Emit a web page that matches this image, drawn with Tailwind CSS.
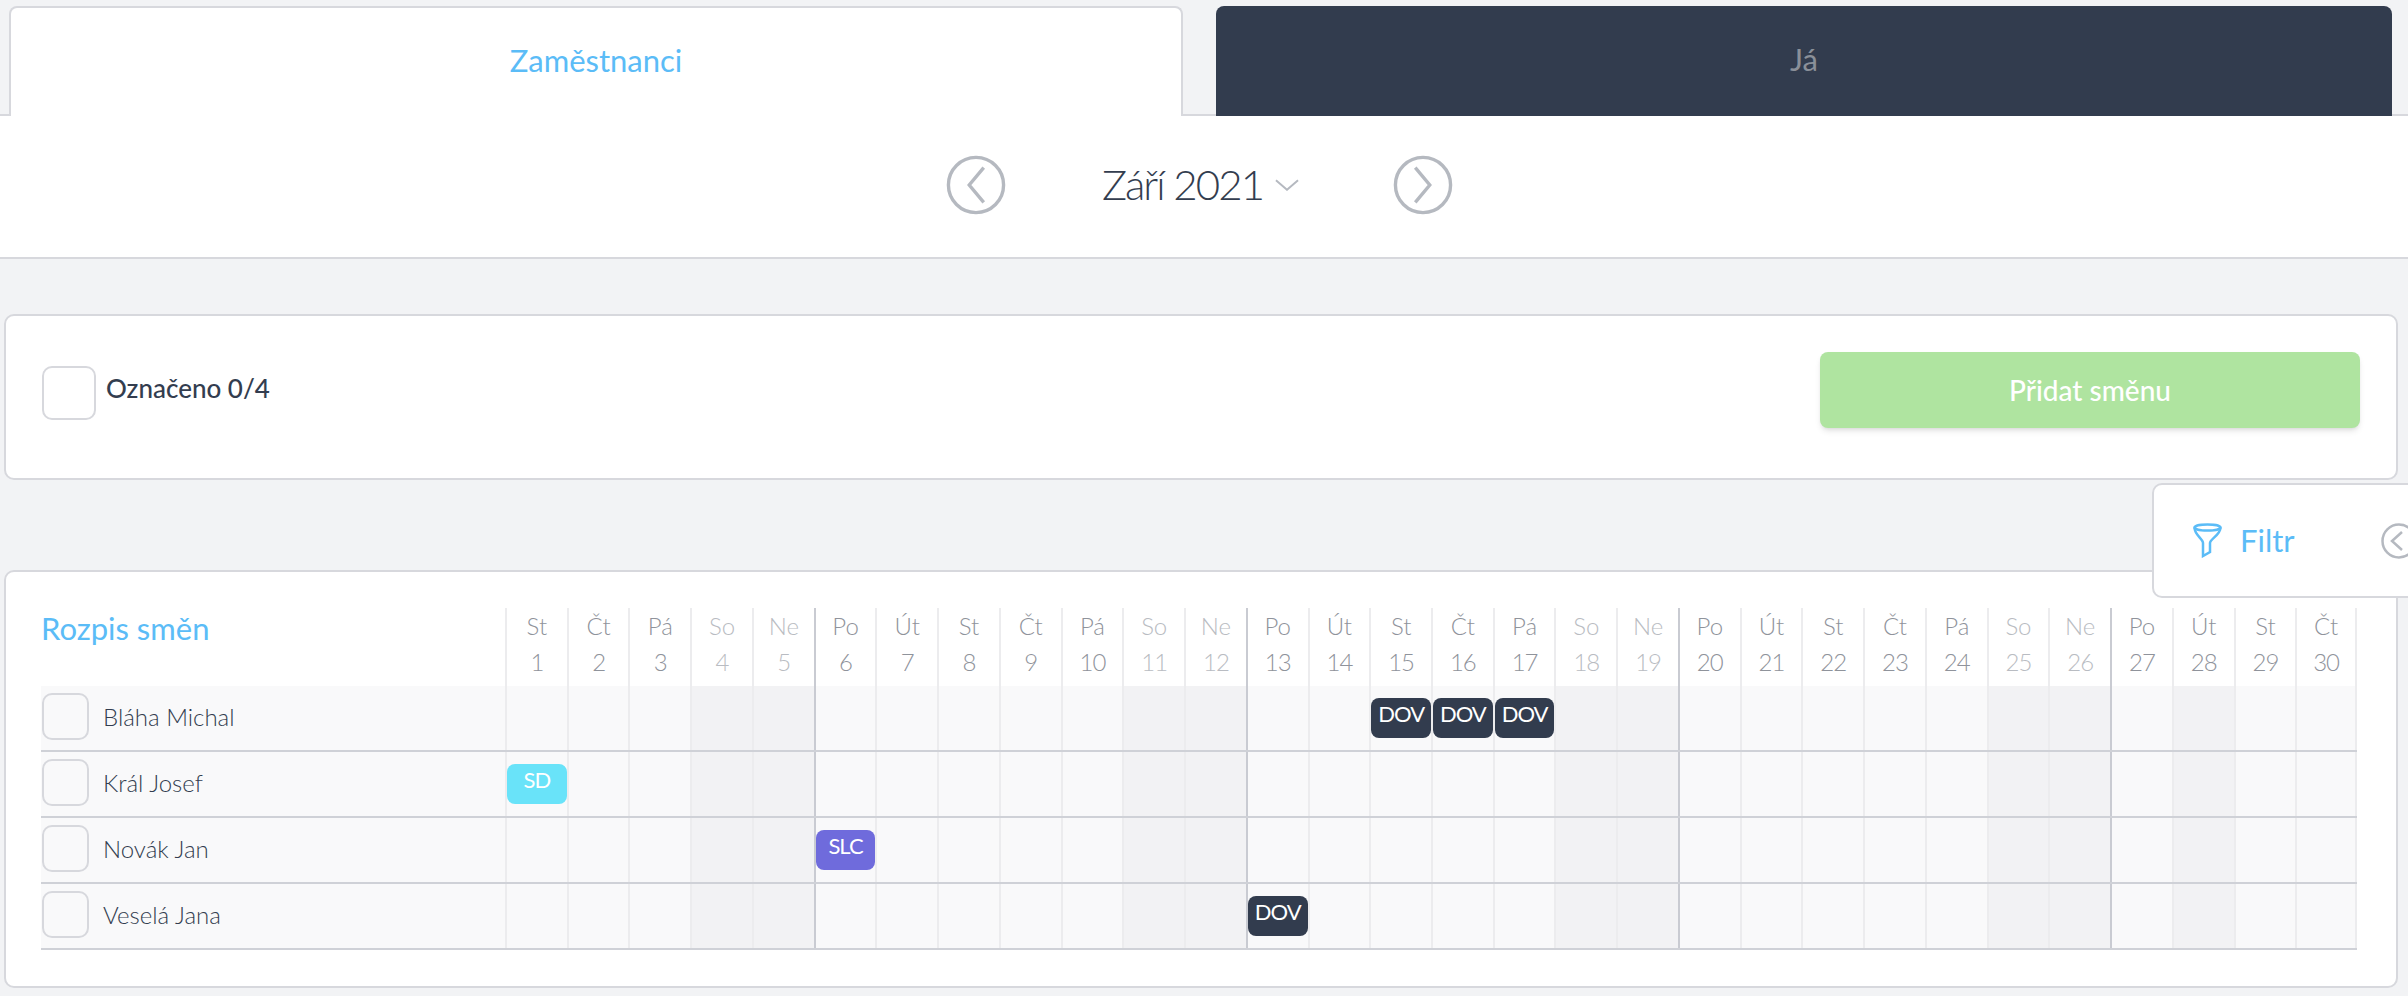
<!DOCTYPE html>
<html lang="cs">
<head>
  <meta charset="UTF-8" />
  <title>Rozpis směn</title>
  <script src="https://cdn.jsdelivr.net/npm/@tailwindcss/browser@4"></script>
</head>
<body class="relative h-[996px] overflow-hidden bg-[#f2f3f5] font-[Lato,sans-serif] text-[#333d4f]">

  <!-- tabs -->
  <div class="relative z-10 flex h-[116px] items-end pt-[6px]">
    <div class="ml-[9px] flex h-[110px] w-[1174px] items-center justify-center rounded-t-[8px] border-2 border-b-0 border-[#d7d8dd] bg-white pb-[4px] text-[31px] text-[#5bbcf7]">Zaměstnanci</div>
    <div class="ml-[33px] flex h-[110px] w-[1176px] items-center justify-center rounded-t-[8px] bg-[#323c4e] pb-[4px] text-[31px] text-[#8a9099]">Já</div>
  </div>

  <!-- month switcher -->
  <div class="-mt-[2px] flex h-[145px] items-center border-y-2 border-[#d7d8dd] bg-white pb-[3px] pl-[946px]">
    <svg class="h-[60px] w-[60px]" viewBox="0 0 62 62" fill="none" stroke="#b5b9c0" stroke-width="3.5"><circle cx="31" cy="31" r="28.5" /><path d="M39 13 L24 31 L39 49" /></svg>
    <div class="ml-[96px] w-[156px] pb-[2px] text-[42px] leading-none font-light tracking-[-1.9px] whitespace-nowrap">Září 2021</div>
    <svg class="ml-[17px] h-[12px] w-[24px]" viewBox="0 0 25 12" fill="none" stroke="#b5b9c0" stroke-width="2"><path d="M1 1 L12.5 11 L24 1" /></svg>
    <svg class="ml-[94px] h-[60px] w-[60px]" viewBox="0 0 62 62" fill="none" stroke="#b5b9c0" stroke-width="3.5"><circle cx="31" cy="31" r="28.5" /><path d="M23 13 L38 31 L23 49" /></svg>
  </div>

  <!-- selection card -->
  <div class="mx-[4px] mt-[55px] flex h-[166px] w-[2394px] items-center justify-between rounded-[10px] border-2 border-[#d7d8dd] bg-white px-[36px]">
    <div class="mb-[9px] flex items-center">
      <div class="h-[54px] w-[54px] rounded-[10px] border-2 border-[#d7d8dd]"></div>
      <span class="ml-[10px] pb-[8px] text-[26px] font-medium">Označeno 0/4</span>
    </div>
    <button class="mb-[14px] flex h-[76px] w-[540px] items-center justify-center rounded-[8px] bg-[#afe4a0] text-[28px] font-medium text-white shadow-md">Přidat směnu</button>
  </div>

  <!-- shifts card -->
  <div class="mx-[4px] mt-[90px] h-[418px] w-[2394px] rounded-[10px] border-2 border-[#d7d8dd] bg-white pt-[36px] pl-[35px]">
    <div class="flex">
      <div class="-mt-[3px] w-[464px] text-[31px] text-[#5bbcf7]">Rozpis směn</div>
      <div id="head" class="grid h-[78px] w-[1852px] grid-cols-[repeat(30,1fr)]"></div>
    </div>
    <div id="rows"></div>
  </div>

  <!-- filter panel -->
  <div class="absolute top-[483px] left-[2152px] z-20 flex h-[115px] w-[270px] items-center rounded-l-[10px] border-2 border-[#d7d8dd] bg-white">
    <svg class="ml-[39px] h-[35px] w-[29px] shrink-0" viewBox="0 0 29 35" fill="none" stroke="#5bbcf7" stroke-width="2.5"><ellipse cx="14.5" cy="4.5" rx="13" ry="3" /><path d="M1.5 4.5 C1.5 12 10 16 10 20 L10 33 L17 29 L17 20 C17 16 27.5 12 27.5 4.5" /></svg>
    <span class="ml-[18px] shrink-0 text-[31px] text-[#5bbcf7]">Filtr</span>
    <svg class="ml-[86px] h-[36px] w-[36px] shrink-0" viewBox="0 0 36 36" fill="none" stroke="#b5b9c0" stroke-width="2.5"><circle cx="18" cy="18" r="16.5" /><path d="M21 9 L11 18 L21 27" /></svg>
  </div>

  <script>
    const days = ["St","Čt","Pá","So","Ne","Po","Út"];
    const shaded = [4,5,11,12,18,19,25,26,28];
    const people = [
      { name: "Bláha Michal", shifts: { 15: "DOV", 16: "DOV", 17: "DOV" } },
      { name: "Král Josef", shifts: { 1: "SD" } },
      { name: "Novák Jan", shifts: { 6: "SLC" } },
      { name: "Veselá Jana", shifts: { 13: "DOV" } }
    ];
    const badgeColor = { DOV: "bg-[#323c4e]", SD: "bg-[#69e3f9]", SLC: "bg-[#6f6bdc]" };

    function dayName(d) { return days[(d - 1) % 7]; }
    function lineColor(d) { return dayName(d) === "Po" ? "border-[#c9cbd2]" : "border-[#ececee]"; }

    let head = "";
    for (let d = 1; d <= 30; d++) {
      const name = dayName(d);
      const weekend = name === "So" || name === "Ne";
      head += `<div class="flex flex-col items-center border-l-2 ${lineColor(d)} ${d === 30 ? "border-r-2 border-r-[#ececee]" : ""} ${weekend ? "text-[#b9bcc2]" : "text-[#8f939b]"} text-[24px] font-light leading-[36px]"><span>${name}</span><span class="tracking-[-1px]">${d}</span></div>`;
    }
    document.getElementById("head").innerHTML = head;

    let rows = "";
    people.forEach((p) => {
      let cells = "";
      for (let d = 1; d <= 30; d++) {
        const s = p.shifts[d];
        const bg = shaded.includes(d) ? "bg-[#f2f2f4]" : "";
        const badge = s ? `<div class="mt-[12px] h-[40px] rounded-[8px] ${badgeColor[s]} text-center text-[22px] leading-[32px] tracking-[-1px] text-white">${s}</div>` : "";
        cells += `<div class="border-l-2 ${lineColor(d)} ${bg} ${d === 30 ? "border-r-2 border-r-[#ececee]" : ""}">${badge}</div>`;
      }
      rows += `<div class="flex h-[66px] w-[2316px] border-b-2 border-[#cfd1d7] bg-[#f9f9fa]">
        <div class="flex w-[464px] items-center">
          <div class="mt-[7px] ml-px h-[47px] w-[47px] self-start rounded-[10px] border-2 border-[#d7d8dd]"></div>
          <span class="ml-[14px] pb-[2px] text-[24px] font-light">${p.name}</span>
        </div>
        <div class="grid w-[1852px] grid-cols-[repeat(30,1fr)]">${cells}</div>
      </div>`;
    });
    document.getElementById("rows").innerHTML = rows;
  </script>
</body>
</html>
